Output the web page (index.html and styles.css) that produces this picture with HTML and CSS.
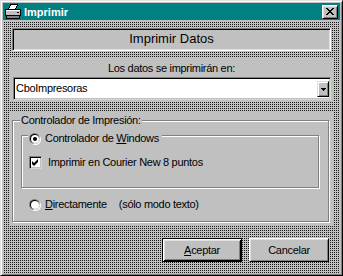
FILE: index.html
```html
<!DOCTYPE html>
<html lang="es">
<head>
    <meta charset="UTF-8">
    <title>Imprimir</title>
    <link rel="stylesheet" href="styles.css">
</head>
<body>
    <div class="window">
        <!-- Title bar -->
        <div class="titlebar">
            <svg class="app-icon" width="16" height="16" viewBox="0 0 16 16" shape-rendering="crispEdges">
                <path d="M5.5 0.5h7l-2 5h-7z" fill="#fff" stroke="#000"/>
                <rect x="0.5" y="5.5" width="15" height="6" fill="#c0c0c0" stroke="#000"/>
                <rect x="1" y="6" width="14" height="1" fill="#fff"/>
                <rect x="1.5" y="11.5" width="13" height="3" fill="#808080" stroke="#000"/>
                <rect x="12" y="8" width="2" height="1" fill="#000"/>
            </svg>
            <span class="title">Imprimir</span>
            <span class="close-btn">
                <svg width="8" height="7" viewBox="0 0 8 7" shape-rendering="crispEdges">
                    <rect x="0" y="0" width="2" height="1"/><rect x="6" y="0" width="2" height="1"/>
                    <rect x="1" y="1" width="2" height="1"/><rect x="5" y="1" width="2" height="1"/>
                    <rect x="2" y="2" width="4" height="1"/>
                    <rect x="3" y="3" width="2" height="1"/>
                    <rect x="2" y="4" width="4" height="1"/>
                    <rect x="1" y="5" width="2" height="1"/><rect x="5" y="5" width="2" height="1"/>
                    <rect x="0" y="6" width="2" height="1"/><rect x="6" y="6" width="2" height="1"/>
                </svg>
            </span>
        </div>

        <!-- Form area -->
        <div class="client">
            <div class="caption-panel">Imprimir Datos</div>

            <div class="dest-panel">
                <div class="dest-label">Los datos se imprimirán en:</div>
                <div class="combo">
                    <span class="combo-text">CboImpresoras</span>
                    <span class="combo-btn">
                        <svg width="5" height="3" viewBox="0 0 5 3" shape-rendering="crispEdges">
                            <rect x="0" y="0" width="5" height="1"/>
                            <rect x="1" y="1" width="3" height="1"/>
                            <rect x="2" y="2" width="1" height="1"/>
                        </svg>
                    </span>
                </div>
            </div>

            <div class="group-panel">
                <fieldset class="frame outer-frame">
                    <legend class="frame-legend">Controlador de Impresión:</legend>
                    <fieldset class="frame inner-frame">
                        <legend class="option-legend">
                            <svg class="radio" width="12" height="12" viewBox="0 0 12 12">
                                <circle cx="6.5" cy="6.5" r="5.5" fill="#fff"/>
                                <circle cx="5.5" cy="5.5" r="5.5" fill="#808080"/>
                                <circle cx="6.5" cy="6.5" r="4.5" fill="#dfdfdf"/>
                                <circle cx="5.5" cy="5.5" r="4.5" fill="#000"/>
                                <circle cx="6" cy="6" r="4" fill="#fff"/>
                                <circle cx="6" cy="6" r="2" fill="#000"/>
                            </svg>
                            <span class="option-text">Controlador de <u>W</u>indows</span>
                        </legend>
                        <div class="check-row">
                            <span class="checkbox">
                                <svg width="7" height="7" viewBox="0 0 7 7">
                                    <path d="M0 2L2 4L6 0V3L2 7L0 5Z"/>
                                </svg>
                            </span>
                            <span>Imprimir en Courier New 8 puntos</span>
                        </div>
                    </fieldset>
                    <div class="option-row">
                        <svg class="radio" width="12" height="12" viewBox="0 0 12 12">
                            <circle cx="6.5" cy="6.5" r="5.5" fill="#fff"/>
                            <circle cx="5.5" cy="5.5" r="5.5" fill="#808080"/>
                            <circle cx="6.5" cy="6.5" r="4.5" fill="#dfdfdf"/>
                            <circle cx="5.5" cy="5.5" r="4.5" fill="#000"/>
                            <circle cx="6" cy="6" r="4" fill="#fff"/>
                        </svg>
                        <span><u>D</u>irectamente</span>
                        <span class="note">(sólo modo texto)</span>
                    </div>
                </fieldset>
            </div>

            <div class="button-row">
                <button class="btn default"><u>A</u>ceptar</button>
                <button class="btn">Cancelar</button>
            </div>
        </div>
    </div>
</body>
</html>
```

FILE: styles.css
```css
body {
    margin: 0;
    padding: 0;
    background: #c0c0c0;
    font-family: "Liberation Sans", Arial, sans-serif;
    font-size: 11px;
    letter-spacing: -0.3px;
    color: #000;
}

.window {
    width: 343px;
    height: 276px;
    box-sizing: border-box;
    display: flex;
    flex-direction: column;
    background: #c0c0c0;
    border: 1px solid;
    border-color: #dfdfdf #000 #000 #dfdfdf;
    box-shadow: inset 1px 1px #fff, inset -1px -1px #808080;
    padding: 2px;
}

/* Title bar */
.titlebar {
    height: 17px;
    flex: none;
    display: flex;
    align-items: center;
    background: #008080;
    padding: 0 2px;
}

.app-icon {
    display: block;
    margin-top: 1px;
}

.title {
    margin-left: 3px;
    color: #fff;
    font-weight: bold;
    font-size: 11px;
    letter-spacing: 0;
}

.close-btn {
    margin-left: auto;
    width: 16px;
    height: 14px;
    box-sizing: border-box;
    display: flex;
    align-items: center;
    justify-content: center;
    background: #c0c0c0;
    border: 1px solid;
    border-color: #fff #000 #000 #fff;
    box-shadow: inset 1px 1px #dfdfdf, inset -1px -1px #808080;
}

.close-btn svg {
    display: block;
}

/* Client area with dithered background */
.client {
    flex: 1;
    margin-top: 2px;
    background-color: #c0c0c0;
    background-image: conic-gradient(#1a1a1a 0 25%, transparent 0 100%);
    background-size: 2px 2px;
}

.caption-panel {
    margin: 6px 0 0 9px;
    width: 319px;
    height: 23px;
    box-sizing: border-box;
    background: #c0c0c0;
    border: 1px solid;
    border-color: #808080 #fff #fff #808080;
    box-shadow: inset 1px 1px #000, inset -1px -1px #dfdfdf;
    text-align: center;
    font-size: 13px;
    letter-spacing: 0;
    line-height: 19px;
}

.dest-panel {
    margin: 6px 0 0 7px;
    width: 323px;
    height: 44px;
    box-sizing: border-box;
    padding-top: 5px;
    background: #c0c0c0;
}

.dest-label {
    text-align: center;
    line-height: 13px;
}

.combo {
    margin: 2px 0 0 3px;
    width: 318px;
    height: 23px;
    box-sizing: border-box;
    display: flex;
    align-items: flex-start;
    background: #fff;
    border: 1px solid;
    border-color: #808080 #c8dcc8 #c8dcc8 #808080;
    box-shadow: inset 1px 1px #000, inset -1px -1px #c0c0c0;
}

.combo-text {
    margin: 4px 0 0 2px;
    line-height: 13px;
}

.combo-btn {
    margin: 3px 1px 0 auto;
    width: 12px;
    height: 16px;
    box-sizing: border-box;
    display: flex;
    align-items: center;
    justify-content: center;
    background: #c0c0c0;
    border: 1px solid;
    border-color: #dfdfdf #000 #000 #dfdfdf;
    box-shadow: inset 1px 1px #fff, inset -1px -1px #808080;
}

.combo-btn svg {
    display: block;
}

/* Frames */
.group-panel {
    margin: 10px 0 0 7px;
    width: 323px;
    height: 115px;
    box-sizing: border-box;
    padding-top: 3px;
    background: #c0c0c0;
}

.frame {
    margin: 0;
    padding: 0;
    min-width: 0;
    box-sizing: border-box;
    border: 1px solid #808080;
    box-shadow: inset 1px 1px #fff, 1px 1px #fff;
}

.outer-frame {
    margin-left: 2px;
    width: 317px;
    height: 108px;
    padding-bottom: 10px;
}

.frame-legend {
    margin-left: 7px;
    padding: 0 1px;
    line-height: 13px;
    background: #c0c0c0;
}

.inner-frame {
    margin: 1px 0 0 8px;
    width: 298px;
    height: 60px;
}

.option-legend {
    margin-left: 6px;
    padding: 0 3px 0 1px;
    height: 15px;
    display: flex;
    align-items: center;
    gap: 4px;
    background: #c0c0c0;
}

.option-legend .radio,
.option-text {
    position: relative;
    top: 3px;
    line-height: 13px;
}

.radio {
    display: block;
    flex: none;
}

.check-row {
    margin: 13px 0 0 7px;
    height: 13px;
    display: flex;
    align-items: center;
    gap: 6px;
    line-height: 13px;
}

.checkbox {
    width: 13px;
    height: 13px;
    box-sizing: border-box;
    display: flex;
    align-items: center;
    justify-content: center;
    background: #fff;
    border: 1px solid;
    border-color: #808080 #c8dcc8 #c8dcc8 #808080;
    box-shadow: inset 1px 1px #000, inset -1px -1px #c0c0c0;
}

.checkbox svg {
    display: block;
}

.option-row {
    margin: 10px 0 0 16px;
    height: 13px;
    display: flex;
    align-items: center;
    gap: 4px;
    line-height: 13px;
}

.option-row .note {
    margin-left: 8px;
}

/* Buttons */
.button-row {
    margin: 12px 0 0 159px;
    display: flex;
    gap: 7px;
}

.btn {
    width: 80px;
    height: 24px;
    box-sizing: border-box;
    padding: 0;
    background: #c0c0c0;
    font-family: "Liberation Sans", Arial, sans-serif;
    font-size: 11px;
    letter-spacing: -0.3px;
    line-height: 13px;
    color: #000;
    border: 1px solid;
    border-color: #fff #000 #000 #fff;
    box-shadow: inset 1px 1px #dfdfdf, inset -1px -1px #808080;
}

.btn.default {
    border-color: #000;
    box-shadow: inset 1px 1px #fff, inset -1px -1px #000, inset 2px 2px #dfdfdf, inset -2px -2px #808080;
}
```
